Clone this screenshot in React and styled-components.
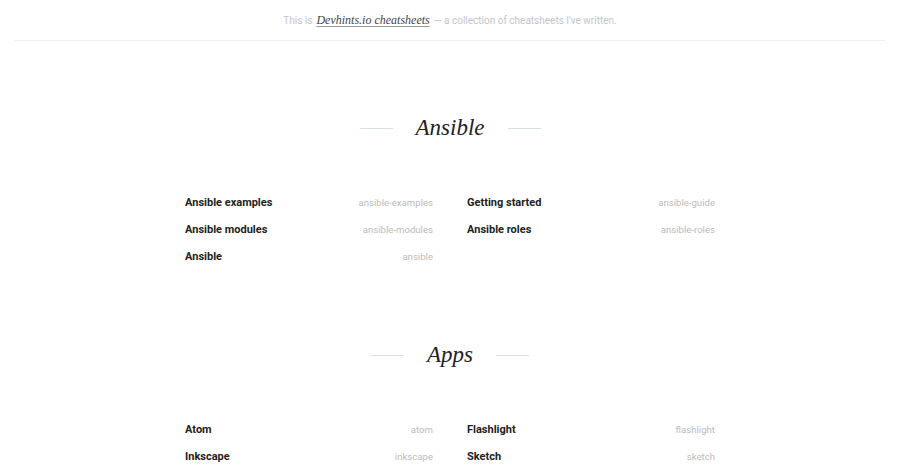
import React from "react";
import styled, { createGlobalStyle } from "styled-components";

const Global = createGlobalStyle`
  html, body { margin: 0; padding: 0; background: #fff; }
  body { font-family: Roboto, "Liberation Sans", sans-serif; -webkit-font-smoothing: antialiased; }
`;

const Page = styled.div`
  padding: 0 15px;
`;

const TopBar = styled.header`
  height: 41px;
  border-bottom: 1px solid #eee;
  display: flex;
  align-items: center;
  justify-content: center;
  font-size: 10px;
  color: #c4c4c8;
  box-sizing: border-box;
`;

const Brand = styled.a`
  font-family: "Liberation Serif", serif;
  font-style: italic;
  font-size: 12px;
  color: #444;
  text-decoration: underline;
  text-decoration-color: #999;
  text-underline-offset: 2px;
  margin: 0 4px;
`;

const Section = styled.section`
  width: 530px;
  margin: 0 auto;
`;

const Heading = styled.h2`
  display: flex;
  align-items: center;
  justify-content: center;
  gap: 23px;
  margin: 0;
  font-family: "Liberation Serif", serif;
  font-style: italic;
  font-weight: 400;
  font-size: 23px;
  color: #222;
  height: 30px;
  margin-top: ${(p) => p.$top}px;
  &::before, &::after {
    content: "";
    width: 33px;
    height: 1px;
    background: #d3e0e4;
  }
`;

const Grid = styled.div`
  display: grid;
  grid-template-columns: 248px 248px;
  column-gap: 34px;
  margin-top: 46px;
`;

const Item = styled.div`
  display: flex;
  justify-content: space-between;
  align-items: baseline;
  height: 27px;
  line-height: 27px;
`;

const Title = styled.span`
  font-size: 11px;
  font-weight: 700;
  color: #222;
`;

const Slug = styled.span`
  font-size: 9.6px;
  color: #bbb;
`;

const sections = [
  {
    name: "Ansible",
    top: 72,
    items: [
      ["Ansible examples", "ansible-examples"],
      ["Getting started", "ansible-guide"],
      ["Ansible modules", "ansible-modules"],
      ["Ansible roles", "ansible-roles"],
      ["Ansible", "ansible"],
    ],
  },
  {
    name: "Apps",
    top: 70,
    items: [
      ["Atom", "atom"],
      ["Flashlight", "flashlight"],
      ["Inkscape", "inkscape"],
      ["Sketch", "sketch"],
    ],
  },
];

export default function App() {
  return (
    <Page>
      <Global />
      <TopBar>
        This is <Brand>Devhints.io cheatsheets</Brand> — a collection of cheatsheets I've written.
      </TopBar>
      {sections.map((s) => (
        <Section key={s.name}>
          <Heading $top={s.top}>{s.name}</Heading>
          <Grid>
            {s.items.map(([t, slug]) => (
              <Item key={slug}>
                <Title>{t}</Title>
                <Slug>{slug}</Slug>
              </Item>
            ))}
          </Grid>
        </Section>
      ))}
    </Page>
  );
}
